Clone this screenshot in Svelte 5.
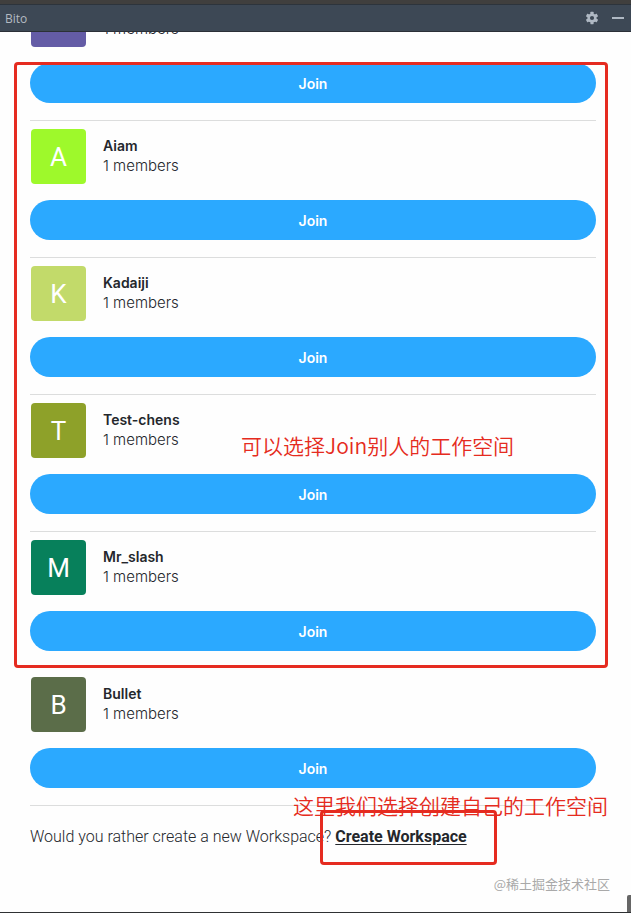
<script lang="ts">
	type Workspace = { name: string; initial: string; members: number; color: string };

	const workspaces: Workspace[] = [
		{ name: '', initial: '', members: 1, color: '#645ca6' },
		{ name: 'Aiam', initial: 'A', members: 1, color: '#9ef92b' },
		{ name: 'Kadaiji', initial: 'K', members: 1, color: '#c2da6a' },
		{ name: 'Test-chens', initial: 'T', members: 1, color: '#8ea129' },
		{ name: 'Mr_slash', initial: 'M', members: 1, color: '#07805b' },
		{ name: 'Bullet', initial: 'B', members: 1, color: '#5b6d49' }
	];

	let joined = $state<number | null>(null);
</script>

<div class="window">
	<header class="titlebar">
		<span class="title">Bito</span>
		<button class="tool" aria-label="Settings">
			<svg width="14" height="14" viewBox="0 0 14 14">
				<g fill="#afb8c3">
					<circle cx="7" cy="7" r="4.6" />
					{#each [0, 60, 120] as angle}
						<rect x="5.4" y="0.8" width="3.2" height="12.4" rx="0.4" transform="rotate({angle} 7 7)" />
					{/each}
				</g>
				<circle cx="7" cy="7" r="2.1" fill="#3d4855" />
			</svg>
		</button>
		<button class="tool" aria-label="Hide">
			<svg width="14" height="14" viewBox="0 0 14 14">
				<rect x="1" y="6" width="12" height="2" fill="#afb8c3" />
			</svg>
		</button>
	</header>

	<!-- list is kept scrolled to its end -->
	<main class="panel">
		<ul class="list">
			{#each workspaces as ws, i}
				<li class="workspace">
					<div class="info">
						<div class="avatar" style="background: {ws.color}">{ws.initial}</div>
						<div class="text">
							<div class="name">{ws.name}</div>
							<div class="members">{ws.members} members</div>
						</div>
					</div>
					<button class="join" onclick={() => (joined = i)}>Join</button>
				</li>
			{/each}
		</ul>
		<p class="create">
			Would you rather create a new Workspace? <a href="#create">Create Workspace</a>
		</p>
	</main>

	<div class="mark mark-list"></div>
	<div class="mark mark-create"></div>
	<div class="note note-join">可以选择Join别人的工作空间</div>
	<div class="note note-create">这里我们选择创建自己的工作空间</div>
	<div class="watermark">@稀土掘金技术社区</div>
	<div class="thumb"></div>
</div>

<style>
	:global(body) {
		margin: 0;
		background: #fefefe;
	}
	.window {
		position: relative;
		box-sizing: border-box;
		display: flex;
		flex-direction: column;
		height: 100vh;
		overflow: hidden;
		border-top: 4px solid #403f3e;
		border-bottom: 1px solid #2f3133;
		font-family: Inter, 'Noto Sans CJK SC', sans-serif;
		color: #24272c;
	}
	.titlebar {
		box-sizing: border-box;
		flex: none;
		display: flex;
		align-items: center;
		gap: 12px;
		height: 28px;
		padding: 0 6px 0 5px;
		background: #3d4855;
		border-top: 1px solid #2d343c;
		border-bottom: 1px solid #2b3037;
	}
	.title {
		flex: 1;
		font-family: 'Open Sans', sans-serif;
		font-size: 12px;
		color: #b4bbc2;
	}
	.tool {
		display: flex;
		padding: 0;
		border: 0;
		background: none;
	}
	.panel {
		flex: 1;
		min-height: 0;
		display: flex;
		flex-direction: column;
		justify-content: flex-end;
		overflow: hidden;
		padding: 0 35px 65px 30px;
	}
	.list {
		margin: 0;
		padding: 0;
		list-style: none;
	}
	.workspace {
		padding: 8px 0 17px;
		border-bottom: 1px solid #dcdddd;
	}
	.workspace:nth-last-child(2) {
		border-color: transparent;
	}
	.info {
		display: flex;
		align-items: center;
		gap: 17px;
		margin: 0 1px 16px;
	}
	.text {
		padding-bottom: 1px;
	}
	.avatar {
		display: flex;
		align-items: center;
		justify-content: center;
		width: 55px;
		height: 55px;
		border-radius: 4px;
		font-family: Roboto, sans-serif;
		font-size: 26px;
		color: #fff;
	}
	.name,
	.members {
		min-height: 20px;
		font-size: 15px;
		line-height: 20px;
	}
	.name {
		font-size: 14px;
		font-weight: 600;
	}
	.members {
		font-weight: 300;
	}
	.join {
		display: block;
		width: 100%;
		height: 40px;
		padding: 0;
		border: 0;
		border-radius: 20px;
		background: #2ba9ff;
		font-family: inherit;
		font-size: 14px;
		font-weight: 600;
		color: #fff;
	}
	.create {
		margin: 21px 0 0;
		font-family: Roboto, sans-serif;
		font-size: 16px;
		line-height: 20px;
		font-weight: 300;
		white-space: nowrap;
	}
	.create a {
		font-weight: 700;
		color: inherit;
		text-underline-offset: 2px;
	}
	.mark {
		position: absolute;
		box-sizing: border-box;
		border: 3px solid #e52b20;
		border-radius: 4px;
		pointer-events: none;
	}
	.mark-list {
		left: 14px;
		right: 23px;
		bottom: 244px;
		height: 606px;
	}
	.mark-create {
		left: 320px;
		bottom: 47px;
		width: 177px;
		height: 55px;
	}
	.note {
		position: absolute;
		font-family: 'Noto Sans CJK SC', sans-serif;
		font-size: 21px;
		line-height: 28px;
		font-weight: 350;
		color: #e52b20;
		white-space: nowrap;
	}
	.note-join {
		left: 241px;
		bottom: 453px;
	}
	.note-create {
		left: 293px;
		bottom: 93px;
	}
	.watermark {
		position: absolute;
		right: 21px;
		bottom: 18px;
		font-family: 'Noto Sans CJK SC', sans-serif;
		font-size: 13px;
		line-height: 20px;
		color: #a9a9a9;
	}
	.thumb {
		position: absolute;
		right: 0;
		bottom: 0;
		width: 4px;
		height: 17px;
		border-radius: 2px 0 0 0;
		background: #666;
	}
</style>
